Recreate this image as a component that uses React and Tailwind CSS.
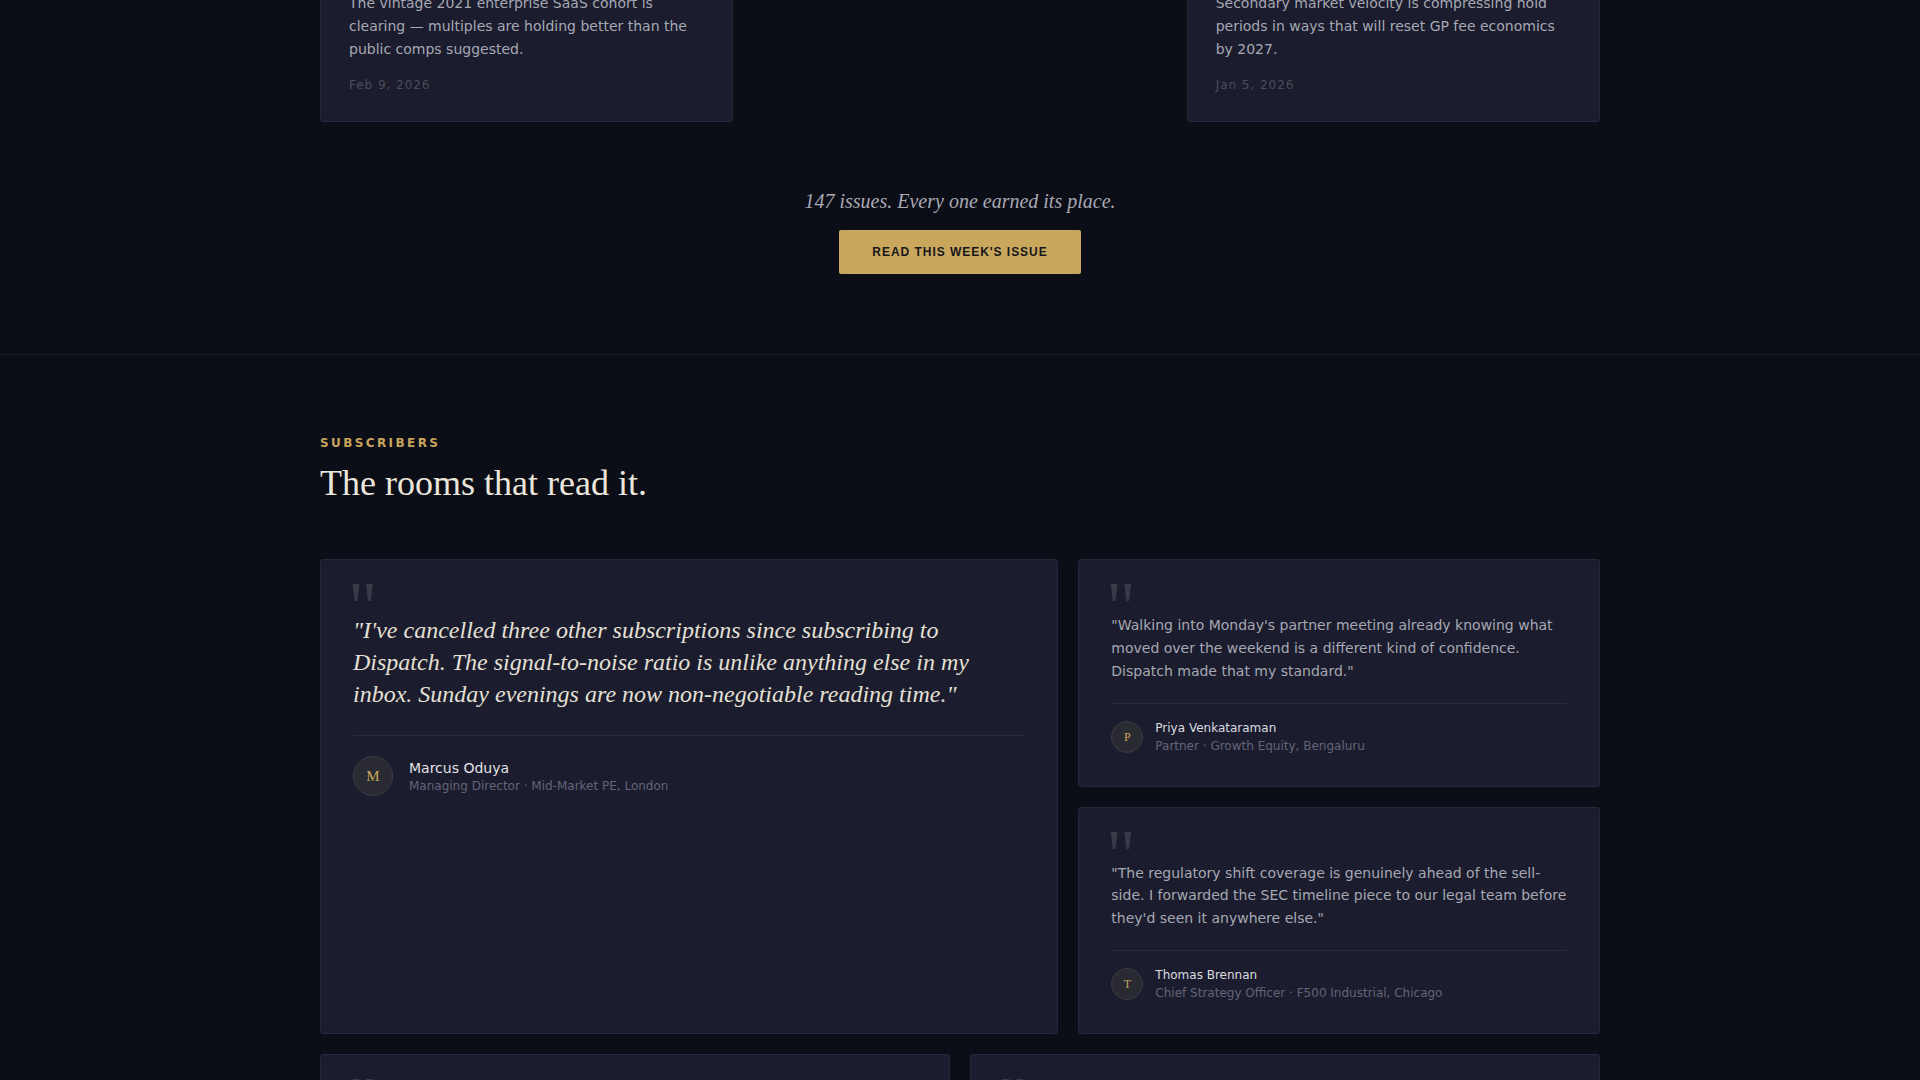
import React from "react";

const serif = "font-['Liberation_Serif','Times_New_Roman',serif]";

function TopCard({ text, date }) {
  return (
    <div className="rounded-[3px] border border-[#25273a] bg-[#1b1c2d] px-7 pt-7 pb-7">
      <p className="text-[14px] leading-[1.625] text-[#a6a8b3]">{text}</p>
      <p className="mt-[17px] text-[12px] leading-4 tracking-[0.08em] text-[#4b4e5e]">{date}</p>
    </div>
  );
}

function QuoteMark() {
  return (
    <div className={`${serif} -ml-[5px] h-[14px] text-[72px] leading-[14px] text-[#383a47] select-none`}>"</div>
  );
}

function Avatar({ letter, big }) {
  return (
    <div
      className={
        big
          ? `flex h-10 w-10 shrink-0 items-center justify-center rounded-full border border-[#3b3b44] bg-[#2a2a33] ${serif} text-[15px] text-[#c9a85c]`
          : `flex h-8 w-8 shrink-0 items-center justify-center rounded-full border border-[#3b3b44] bg-[#2a2a33] ${serif} text-[12px] text-[#c9a85c]`
      }
    >
      {letter}
    </div>
  );
}

function SmallCard({ quote, name, role, letter }) {
  return (
    <div className="rounded-[3px] border border-[#25273a] bg-[#1b1c2d] px-8 pt-10 pb-8">
      <QuoteMark />
      <p className="mb-5 text-[14px] leading-[1.625] text-[#a6a8b3]">{quote}</p>
      <div className="flex items-center gap-3 border-t border-[#2a2c3d] pt-4">
        <Avatar letter={letter} />
        <div>
          <p className="text-[12px] leading-4 text-[#dcdce0]">{name}</p>
          <p className="mt-0.5 text-[12px] leading-4 text-[#62657a]">{role}</p>
        </div>
      </div>
    </div>
  );
}

export default function App() {
  return (
    <div className="min-h-screen overflow-hidden bg-[#0b0d17] font-['DejaVu_Sans',sans-serif]">
      <section className="border-b border-[#1b1d2a] pb-20">
        <div className="mx-auto w-[1280px]">
          <div className="-mt-[37px] grid grid-cols-3 items-start gap-5">
            <TopCard
              text="The vintage 2021 enterprise SaaS cohort is clearing — multiples are holding better than the public comps suggested."
              date="Feb 9, 2026"
            />
            <div />
            <TopCard
              text="Secondary market velocity is compressing hold periods in ways that will reset GP fee economics by 2027."
              date="Jan 5, 2026"
            />
          </div>
          <div className="mt-[65px] flex flex-col items-center">
            <p className={`${serif} text-[20px] italic leading-7 text-[#a9a9b3]`}>
              147 issues. Every one earned its place.
            </p>
            <button className="mt-[15px] flex h-[44px] items-center rounded-[2px] bg-[#c9a85e] px-[33px] font-['Liberation_Sans',Arial,sans-serif] text-[12px] font-bold tracking-[0.08em] text-[#17161a]">
              READ THIS WEEK'S ISSUE
            </button>
          </div>
        </div>
      </section>

      <section className="pt-20 pb-20">
        <div className="mx-auto w-[1280px]">
          <p className="text-[12px] font-bold leading-4 tracking-[0.2em] text-[#c9a45c]">SUBSCRIBERS</p>
          <h2 className={`${serif} mt-[11px] text-[36px] leading-[1.2] text-[#ebe6da]`}>The rooms that read it.</h2>

          <div className="mt-[54px] grid grid-cols-12 gap-5">
            <div className="col-span-7 rounded-[3px] border border-[#25273a] bg-[#1b1c2d] px-8 pt-10 pb-8">
              <QuoteMark />
              <p className={`${serif} mb-[25px] text-[24px] italic leading-[32px] text-[#e4e0d6]`}>
                "I've cancelled three other subscriptions since subscribing to Dispatch. The signal-to-noise ratio is unlike anything else in my inbox. Sunday evenings are now non-negotiable reading time."
              </p>
              <div className="flex items-center gap-4 border-t border-[#2a2c3d] pt-5">
                <Avatar letter="M" big />
                <div>
                  <p className="text-[14px] leading-5 text-[#e2e2e6]">Marcus Oduya</p>
                  <p className="text-[12px] leading-4 text-[#62657a]">Managing Director · Mid-Market PE, London</p>
                </div>
              </div>
            </div>
            <div className="col-span-5 flex flex-col gap-5">
              <SmallCard
                quote={"\"Walking into Monday's partner meeting already knowing what moved over the weekend is a different kind of confidence. Dispatch made that my standard.\""}
                name="Priya Venkataraman"
                role="Partner · Growth Equity, Bengaluru"
                letter="P"
              />
              <SmallCard
                quote={"\"The regulatory shift coverage is genuinely ahead of the sell-side. I forwarded the SEC timeline piece to our legal team before they'd seen it anywhere else.\""}
                name="Thomas Brennan"
                role="Chief Strategy Officer · F500 Industrial, Chicago"
                letter="T"
              />
            </div>
          </div>

          <div className="mt-5 grid grid-cols-2 gap-5">
            <SmallCard
              quote={"\"Every Sunday I know exactly which three conversations I need to have on Monday morning. That clarity is worth more than the subscription.\""}
              name="Elena Marchetti"
              role="Principal · Infrastructure Fund, Milan"
              letter="E"
            />
            <SmallCard
              quote={"\"It reads like it was written by someone who has sat on both sides of the table. Concise, sourced, and never breathless.\""}
              name="David Okafor"
              role="Head of Corporate Development · Fintech, New York"
              letter="D"
            />
          </div>
        </div>
      </section>
    </div>
  );
}
